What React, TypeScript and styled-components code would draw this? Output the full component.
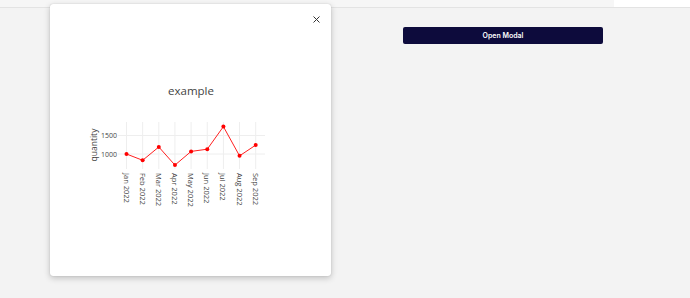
import React from 'react'
import styled, { createGlobalStyle } from 'styled-components'

const GlobalStyle = createGlobalStyle`
  html, body {
    margin: 0;
    padding: 0;
    background: #f3f3f3;
    font-family: Inter, "Open Sans", "Liberation Sans", sans-serif;
  }
`

const Page = styled.div`
  display: flex;
  flex-direction: column;
  width: 100vw;
  min-height: 100vh;
  background: #f3f3f3;
  position: relative;
`

const TopBar = styled.div`
  display: flex;
  flex-direction: row;
  height: 7px;
  border-bottom: 1px solid #e3e3e3;
`

const TopBarFill = styled.div<{ $light?: boolean }>`
  flex: ${p => (p.$light ? '0 0 76px' : '1')};
  background: ${p => (p.$light ? '#ffffff' : '#f6f6f6')};
`

const Content = styled.div`
  display: flex;
  flex-direction: row;
  padding: 19px 0 0 403px;
`

const OpenButton = styled.button`
  width: 200px;
  height: 17px;
  border: none;
  border-radius: 2px;
  background: #0d0b3c;
  color: #ffffff;
  font-family: Inter, "Liberation Sans", sans-serif;
  font-weight: 600;
  font-size: 7px;
  cursor: pointer;
  padding: 0;
`

const Modal = styled.div`
  position: absolute;
  left: 50px;
  top: 4px;
  width: 281px;
  height: 272px;
  background: #ffffff;
  border-radius: 3px;
  box-shadow: 0 2px 6px rgba(0, 0, 0, 0.22), 0 0 1px rgba(0, 0, 0, 0.25);
  display: flex;
  flex-direction: column;
  padding-top: 40px;
  box-sizing: border-box;
`

const CloseButton = styled.button`
  position: absolute;
  top: 12px;
  right: 11px;
  width: 7px;
  height: 7px;
  border: none;
  background: transparent;
  padding: 0;
  cursor: pointer;
  display: flex;
`

const ChartSvg = styled.svg`
  display: block;
  font-family: "Open Sans", "Liberation Sans", sans-serif;
`

const data = [
  { label: 'Jan 2022', value: 1000 },
  { label: 'Feb 2022', value: 830 },
  { label: 'Mar 2022', value: 1190 },
  { label: 'Apr 2022', value: 700 },
  { label: 'May 2022', value: 1070 },
  { label: 'Jun 2022', value: 1130 },
  { label: 'Jul 2022', value: 1740 },
  { label: 'Aug 2022', value: 950 },
  { label: 'Sep 2022', value: 1240 },
]

// modal-relative coordinates: svg origin at page (50, 44)
const ox = 50
const oy = 44
const xAt = (i: number) => 126.5 + 16.15 * i - ox
const yAt = (v: number) => 154 - ((v - 1000) / 500) * 18.5 - oy

function Chart() {
  const pts = data.map((d, i) => `${xAt(i)},${yAt(d.value)}`).join(' ')
  const top = 122 - oy
  const bottom = 169 - oy
  const left = 118 - ox
  const right = 265 - ox
  return (
    <ChartSvg width={281} height={190} viewBox="0 0 281 190">
      <text x={191 - ox} y={95 - oy} fontSize={11.5} fill="#444" textAnchor="middle">
        example
      </text>
      {data.map((d, i) => (
        <line key={'v' + i} x1={xAt(i)} x2={xAt(i)} y1={top} y2={bottom} stroke="#eeeeee" strokeWidth={1} />
      ))}
      {[1000, 1500].map(v => (
        <line key={'h' + v} x1={left} x2={right} y1={yAt(v)} y2={yAt(v)} stroke="#eeeeee" strokeWidth={1} />
      ))}
      {[1000, 1500].map(v => (
        <text key={'t' + v} x={117 - ox} y={yAt(v) + 2.5} fontSize={7} fill="#444" textAnchor="end">
          {v}
        </text>
      ))}
      <text
        x={97 - ox}
        y={145 - oy}
        fontSize={8.5}
        fill="#444"
        textAnchor="middle"
        transform={`rotate(-90, ${97 - ox}, ${145 - oy})`}
      >
        quantity
      </text>
      <polyline points={pts} fill="none" stroke="#ff2020" strokeWidth={1} />
      {data.map((d, i) => (
        <circle key={'c' + i} cx={xAt(i)} cy={yAt(d.value)} r={2} fill="#ff0000" />
      ))}
      {data.map((d, i) => (
        <text
          key={'x' + i}
          x={xAt(i)}
          y={173 - oy}
          fontSize={7.5}
          fill="#444"
          dominantBaseline="central"
          transform={`rotate(90, ${xAt(i)}, ${173 - oy})`}
        >
          {d.label}
        </text>
      ))}
    </ChartSvg>
  )
}

export default function App() {
  return (
    <>
      <GlobalStyle />
      <Page>
        <TopBar>
          <TopBarFill />
          <TopBarFill $light />
        </TopBar>
        <Content>
          <OpenButton>Open Modal</OpenButton>
        </Content>
        <Modal>
          <CloseButton aria-label="close">
            <svg width="7" height="7" viewBox="0 0 7 7">
              <path d="M0.5 0.5 L6.5 6.5 M6.5 0.5 L0.5 6.5" stroke="#333" strokeWidth="1" fill="none" />
            </svg>
          </CloseButton>
          <Chart />
        </Modal>
      </Page>
    </>
  )
}
